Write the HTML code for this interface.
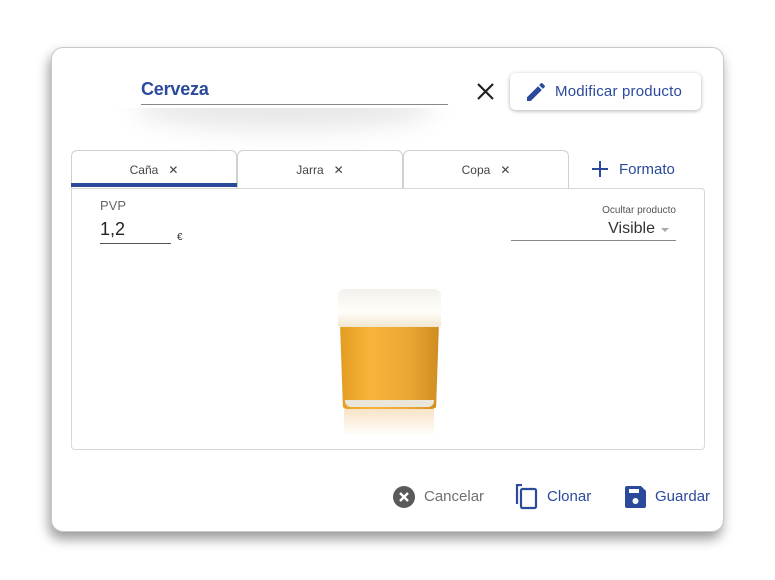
<!DOCTYPE html>
<html><head><meta charset="utf-8"><style>
*{box-sizing:border-box;margin:0;padding:0}
body{width:775px;height:580px;background:#fff;font-family:"Liberation Sans",sans-serif;position:relative;overflow:hidden}
.a{position:absolute}
.card{left:51px;top:47px;width:673px;height:485px;border-radius:12px;border:1px solid #c8c8c8;background:#fff;box-shadow:-2px 7px 12px rgba(0,0,0,.4)}
.blue{color:#2b4a9b}
.tab{top:150px;height:38px;width:166px;border:1px solid #d0d0d0;border-bottom:none;border-radius:6px 6px 0 0;background:#fff;font-size:12px;color:#444;text-align:center;line-height:38px}
</style></head><body>
<div class="a card"></div>
<div class="a" style="left:135px;top:85px;width:300px;height:45px;border-radius:50%;background:rgba(0,0,0,.09);filter:blur(12px)"></div>
<div class="a" style="left:120px;top:62px;width:345px;height:46px;background:#fff"></div>
<div class="a blue" style="left:141px;top:79px;font-size:18px;font-weight:bold;letter-spacing:-.2px">Cerveza</div>
<div class="a" style="left:141px;top:104px;width:307px;height:1px;background:#888"></div>
<svg class="a" style="left:477px;top:83px" width="17" height="17" viewBox="0 0 17 17"><path d="M1 1L16 16M16 1L1 16" stroke="#222" stroke-width="2.2"/></svg>
<div class="a" style="left:510px;top:73px;width:191px;height:37px;border-radius:6px;background:#fff;box-shadow:0 1px 4px rgba(0,0,0,.3)"></div>
<svg class="a" style="left:524px;top:80px" width="24" height="24" viewBox="0 0 24 24"><path fill="#2b4a9b" d="M3 17.25V21h3.75L17.81 9.94l-3.75-3.75L3 17.25zM20.71 7.04a1 1 0 0 0 0-1.41l-2.34-2.34a1 1 0 0 0-1.41 0l-1.83 1.83 3.75 3.75 1.83-1.83z"/></svg>
<div class="a blue" style="left:555px;top:83px;font-size:15px;letter-spacing:.2px">Modificar producto</div>
<div class="a tab" style="left:71px">Caña &nbsp;&nbsp;✕</div>
<div class="a tab" style="left:237px">Jarra &nbsp;&nbsp;✕</div>
<div class="a tab" style="left:403px">Copa &nbsp;&nbsp;✕</div>
<div class="a" style="left:71px;top:183px;width:166px;height:4px;background:#2b4a9b"></div>
<svg class="a" style="left:592px;top:161px" width="16" height="16"><path d="M8 0V16M0 8H16" stroke="#2b4a9b" stroke-width="2"/></svg>
<div class="a blue" style="left:619px;top:161px;font-size:15px">Formato</div>
<div class="a" style="left:71px;top:188px;width:634px;height:262px;border:1px solid #d8d8d8;border-radius:0 4px 4px 4px"></div>
<div class="a" style="left:100px;top:198px;font-size:13px;color:#666">PVP</div>
<div class="a" style="left:100px;top:219px;font-size:18px;color:#222">1,2</div>
<div class="a" style="left:100px;top:243px;width:71px;height:1px;background:#555"></div>
<div class="a" style="left:177px;top:232px;font-size:10px;color:#333">€</div>
<div class="a" style="left:560px;top:205px;width:116px;text-align:right;font-size:10px;color:#555">Ocultar producto</div>
<div class="a" style="left:560px;top:220px;width:95px;text-align:right;font-size:16px;color:#333">Visible</div>
<div class="a" style="left:661px;top:228px;border:4px solid transparent;border-top:4px solid #aaa"></div>
<div class="a" style="left:511px;top:240px;width:165px;height:1px;background:#888"></div>
<!-- beer -->
<div class="a" style="left:344px;top:408px;width:90px;height:29px;background:linear-gradient(#f6dcb6,#fff);opacity:.8"></div>
<div class="a" style="left:340px;top:323px;width:99px;height:86px;clip-path:polygon(0 0,100% 0,97% 100%,3% 100%);border-radius:0 0 8px 8px;background:linear-gradient(90deg,#e39c22,#f8b33a 30%,#eba734 70%,#cf8c20)"></div>
<div class="a" style="left:345px;top:400px;width:89px;height:7px;border-radius:0 0 6px 6px;background:#ebe6da"></div>
<div class="a" style="left:338px;top:289px;width:103px;height:38px;border-radius:7px 7px 2px 2px;background:linear-gradient(#f3f1ec,#fffef9 60%,#f1e7d0)"></div>
<!-- footer -->
<svg class="a" style="left:393px;top:486px" width="22" height="22" viewBox="0 0 22 22"><circle cx="11" cy="11" r="11" fill="#5a5a5a"/><path d="M7 7L15 15M15 7L7 15" stroke="#fff" stroke-width="2.4"/></svg>
<div class="a" style="left:424px;top:488px;font-size:15px;color:#707070">Cancelar</div>
<svg class="a" style="left:515px;top:484px" width="24" height="26" viewBox="0 0 24 26"><path d="M7 1H2V20" stroke="#2b4a9b" stroke-width="2.2" fill="none"/><rect x="6" y="5" width="15" height="19" rx="1.5" stroke="#2b4a9b" stroke-width="2.2" fill="none"/></svg>
<div class="a blue" style="left:547px;top:488px;font-size:15px">Clonar</div>
<svg class="a" style="left:625px;top:486px" width="21" height="22" viewBox="0 0 21 22"><path fill="#2b4a9b" d="M2 0H16L21 5V20a2 2 0 0 1-2 2H2a2 2 0 0 1-2-2V2a2 2 0 0 1 2-2z"/><rect x="4" y="3" width="10" height="4" fill="#fff"/><circle cx="10.5" cy="15" r="3" fill="#fff"/></svg>
<div class="a blue" style="left:655px;top:488px;font-size:15px">Guardar</div>
</body></html>
